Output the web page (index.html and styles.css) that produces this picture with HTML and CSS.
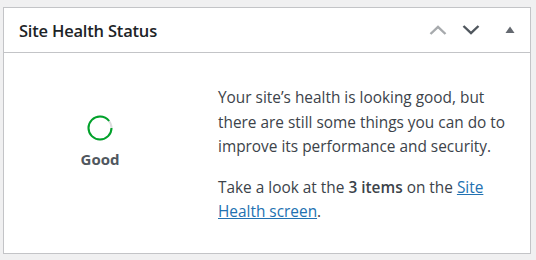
FILE: index.html
```html
<!DOCTYPE html>
<html lang="en">
<head>
<meta charset="utf-8">
<title>Site Health Status</title>
<link rel="stylesheet" href="styles.css">
</head>
<body>
<div class="postbox">
  <div class="postbox-header">
    <h2 class="hndle">Site Health Status</h2>
    <div class="handle-actions">
      <button class="handle-btn" aria-label="Move up">
        <svg width="18" height="10" viewBox="0 0 18 10"><path d="M1.5 9 L9 1.8 L16.5 9" fill="none" stroke="#a7aaad" stroke-width="2.4"/></svg>
      </button>
      <button class="handle-btn" aria-label="Move down">
        <svg width="18" height="10" viewBox="0 0 18 10"><path d="M1.5 1 L9 8.2 L16.5 1" fill="none" stroke="#50575e" stroke-width="2.4"/></svg>
      </button>
      <button class="handle-btn toggle" aria-label="Toggle panel">
        <svg width="10" height="8" viewBox="0 0 10 8"><path d="M0.5 7 L5 0.5 L9.5 7 Z" fill="#646970"/></svg>
      </button>
    </div>
  </div>
  <div class="inside">
    <div class="health-title">
      <svg class="health-circle" width="26" height="26" viewBox="0 0 26 26">
        <circle cx="13" cy="13" r="11.5" fill="none" stroke="#dcdcde" stroke-width="2"/>
        <circle cx="13" cy="13" r="11.5" fill="none" stroke="#00a32a" stroke-width="2" stroke-dasharray="64.3 72.3"/>
      </svg>
      <div class="health-label">Good</div>
    </div>
    <div class="health-details">
      <p>Your site’s health is looking good, but there are still some things you can do to improve its performance and security.</p>
      <p>Take a look at the <strong>3 items</strong> on the <a href="#">Site Health screen</a>.</p>
    </div>
  </div>
</div>
</body>
</html>
```
FILE: styles.css
```css
html, body {
  margin: 0;
  padding: 0;
}
body {
  background: #f0f0f1;
  font-family: "Open Sans", "Noto Sans", sans-serif;
  color: #3c434a;
  padding: 7px 5px 6px 3px;
}
.postbox {
  background: #fff;
  border: 1px solid #c3c4c7;
  box-sizing: border-box;
  height: 247px;
}
.postbox-header {
  display: flex;
  align-items: center;
  justify-content: space-between;
  height: 44px;
  border-bottom: 1px solid #c3c4c7;
  padding: 0 14px 0 15px;
}
.hndle {
  margin: 0;
  font-size: 16.5px;
  font-weight: 600;
  color: #1d2327;
  letter-spacing: -0.2px;
}
.handle-actions {
  display: flex;
  align-items: center;
}
.handle-btn {
  background: none;
  border: 0;
  padding: 0;
  margin: 0 0 0 15px;
  display: flex;
  align-items: center;
  justify-content: center;
  width: 18px;
  height: 20px;
}
.handle-btn.toggle {
  margin-left: 24px;
  width: 12px;
}
.inside {
  display: grid;
  grid-template-columns: 214px 297px;
}
.health-title {
  display: flex;
  flex-direction: column;
  align-items: center;
  padding-top: 62px;
  padding-right: 22px;
}
.health-circle {
  display: block;
}
.health-label {
  margin-top: 8px;
  font-size: 15px;
  font-weight: 700;
  color: #50575e;
}
.health-details {
  padding-top: 33px;
  font-size: 15.4px;
  line-height: 24.5px;
}
.health-details p {
  margin: 0 0 16px;
}
.health-details strong {
  font-weight: 600;
}
.health-details a {
  color: #2271b1;
  text-decoration: underline;
}
```
